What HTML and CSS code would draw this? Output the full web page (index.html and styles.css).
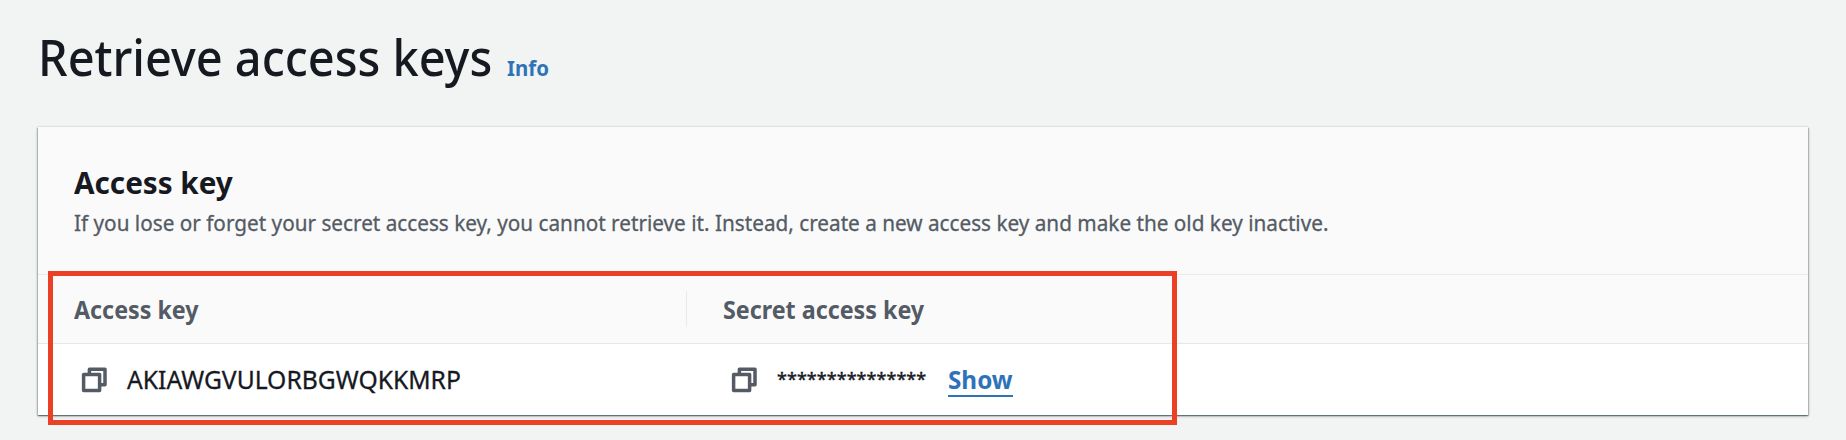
FILE: index.html
```html
<!DOCTYPE html>
<html lang="en">
<head>
<meta charset="utf-8">
<title>Retrieve access keys</title>
<link rel="stylesheet" href="styles.css">
</head>
<body>
<main class="page">
  <header class="page-header">
    <h1 class="page-title"><span class="fit fit-title">Retrieve access keys</span></h1>
    <a class="info"><span class="fit fit-info">Info</span></a>
  </header>
  <section class="card">
    <div class="card-header">
      <h2 class="card-title"><span class="fit fit-heading">Access key</span></h2>
      <p class="card-desc"><span class="fit fit-desc">If you lose or forget your secret access key, you cannot retrieve it. Instead, create a new access key and make the old key inactive.</span></p>
    </div>
    <div class="row row-head">
      <div class="cell"><span class="fit fit-th">Access key</span></div>
      <div class="cell cell-divided"><span class="fit fit-th">Secret access key</span></div>
    </div>
    <div class="row row-body">
      <div class="cell">
        <svg class="copy" viewBox="0 0 26 26"><path d="M8.4 7V2.2H24v15.6h-5M2.6 7.5h16v16h-16z"/></svg>
        <span class="value"><span class="fit fit-key">AKIAWGVULORBGWQKKMRP</span></span>
      </div>
      <div class="cell">
        <svg class="copy" viewBox="0 0 26 26"><path d="M8.4 7V2.2H24v15.6h-5M2.6 7.5h16v16h-16z"/></svg>
        <span class="value secret">***************</span>
        <a class="show"><span class="fit fit-show">Show</span></a>
      </div>
    </div>
    <div class="highlight"></div>
  </section>
</main>
</body>
</html>
```
FILE: styles.css
```css
* { box-sizing: border-box; }
body {
  margin: 0;
  height: 440px;
  overflow: hidden;
  background: #f2f4f3;
  color: #16191f;
  font-family: "Noto Sans", "Open Sans", sans-serif;
}
h1, h2, p { margin: 0; font-weight: 400; }
.page { padding: 23px 38px 0; }
.page-header { display: flex; align-items: baseline; height: 104px; }
.fit { display: inline-block; transform-origin: 0 50%; white-space: nowrap; }
.fit-title { transform: scaleX(.938); }
.fit-info { transform: scaleX(.95); }
.fit-heading { transform: scaleX(.957); }
.fit-desc { transform: scaleX(.964); -webkit-text-stroke: .3px; }
.fit-th { transform: scaleX(.95); }
.fit-key { transform: scaleX(1.007); -webkit-text-stroke: .3px; }
.page-title { width: 469px; font-size: 50px; line-height: 68px; font-weight: 500; }
.info { color: #2e73b8; font-size: 21.5px; font-weight: 700; }
.card {
  position: relative;
  height: 288px;
  background: #fff;
  box-shadow: 0 1px 1px 0 rgba(0, 28, 36, .3), 1px 1px 1px 0 rgba(0, 28, 36, .15), -1px 1px 1px 0 rgba(0, 28, 36, .15), 0 1px 3px 0 rgba(0, 28, 36, .3), 0 -1px 0 0 #eaeded;
}
.card-header { height: 148px; padding: 34px 36px 0; background: #fafafa; border-bottom: 1px solid #eaeaea; }
.card-title { font-size: 31px; line-height: 42px; font-weight: 700; }
.card-desc { color: #545b64; font-size: 21.5px; line-height: 40px; }
.row { display: grid; grid-template-columns: 648px 1fr; }
.row-head { height: 69px; background: #fafafa; border-bottom: 1px solid #e7e7e7; color: #545b64; font-size: 24.5px; font-weight: 700; align-items: center; }
.cell { display: flex; align-items: center; height: 36px; padding-left: 36px; }
.cell-divided { width: 300px; border-left: 1px solid #eaeaea; }
.row-body { height: 71px; align-items: center; font-size: 24.5px; }
.row-body .cell { height: 35px; }
.row-body .cell + .cell { padding-left: 38px; }
.copy { width: 26px; height: 26px; margin-left: 7px; fill: none; stroke: #545b64; stroke-width: 3.5; stroke-linejoin: round; }
.value { margin-left: 20px; }
.secret { width: 171px; padding-bottom: 1px; font-size: 18px; letter-spacing: .03px; -webkit-text-stroke: .4px; }
.show { width: 65px; height: 35px; line-height: 35px; border-bottom: 2px solid #2e73b8; color: #2e73b8; font-weight: 700; }
.fit-show { transform: scaleX(.99); }
.highlight { position: absolute; left: 10px; top: 144px; width: 1129px; height: 154px; border: 5px solid #eb4026; }
```
